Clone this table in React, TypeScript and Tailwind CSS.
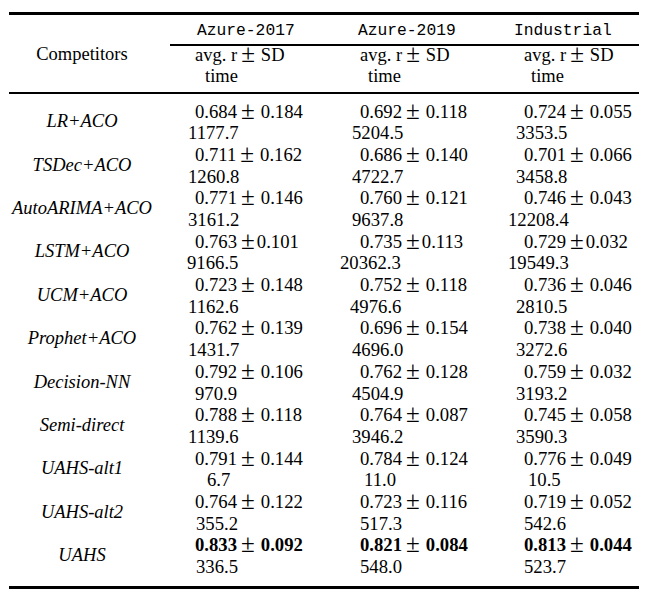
const serif = "font-['Liberation_Serif','Times_New_Roman',serif]"
const mono = "font-['Liberation_Mono','Courier_New',monospace]"

type Cell = { r: string; sd: string; time: string; pad: string }
type Row = { name: string; cells: Cell[]; tight?: boolean; bold?: boolean }

const COLS = ["w-[165px]", "w-[164px]", "w-[139px]"]

const HEADERS = [
  { title: "Azure-2017", titlePad: "pl-[27px]", timePad: "pl-[35px]" },
  { title: "Azure-2019", titlePad: "pl-[23px]", timePad: "pl-[33px]" },
  { title: "Industrial", titlePad: "pl-[15px]", timePad: "pl-[32px]" },
]

const ROWS: Row[] = [
  {
    name: "LR+ACO",
    cells: [
      { r: "0.684", sd: "0.184", time: "1177.7", pad: "pl-[18px]" },
      { r: "0.692", sd: "0.118", time: "5204.5", pad: "pl-[17px]" },
      { r: "0.724", sd: "0.055", time: "3353.5", pad: "pl-[17px]" },
    ],
  },
  {
    name: "TSDec+ACO",
    cells: [
      { r: "0.711", sd: "0.162", time: "1260.8", pad: "pl-[18px]" },
      { r: "0.686", sd: "0.140", time: "4722.7", pad: "pl-[17px]" },
      { r: "0.701", sd: "0.066", time: "3458.8", pad: "pl-[17px]" },
    ],
  },
  {
    name: "AutoARIMA+ACO",
    cells: [
      { r: "0.771", sd: "0.146", time: "3161.2", pad: "pl-[18px]" },
      { r: "0.760", sd: "0.121", time: "9637.8", pad: "pl-[17px]" },
      { r: "0.746", sd: "0.043", time: "12208.4", pad: "pl-[9px]" },
    ],
  },
  {
    name: "LSTM+ACO",
    tight: true,
    cells: [
      { r: "0.763", sd: "0.101", time: "9166.5", pad: "pl-[17px]" },
      { r: "0.735", sd: "0.113", time: "20362.3", pad: "pl-[5px]" },
      { r: "0.729", sd: "0.032", time: "19549.3", pad: "pl-[9px]" },
    ],
  },
  {
    name: "UCM+ACO",
    cells: [
      { r: "0.723", sd: "0.148", time: "1162.6", pad: "pl-[18px]" },
      { r: "0.752", sd: "0.118", time: "4976.6", pad: "pl-[15px]" },
      { r: "0.736", sd: "0.046", time: "2810.5", pad: "pl-[17px]" },
    ],
  },
  {
    name: "Prophet+ACO",
    cells: [
      { r: "0.762", sd: "0.139", time: "1431.7", pad: "pl-[18px]" },
      { r: "0.696", sd: "0.154", time: "4696.0", pad: "pl-[17px]" },
      { r: "0.738", sd: "0.040", time: "3272.6", pad: "pl-[17px]" },
    ],
  },
  {
    name: "Decision-NN",
    cells: [
      { r: "0.792", sd: "0.106", time: "970.9", pad: "pl-[25px]" },
      { r: "0.762", sd: "0.128", time: "4504.9", pad: "pl-[17px]" },
      { r: "0.759", sd: "0.032", time: "3193.2", pad: "pl-[17px]" },
    ],
  },
  {
    name: "Semi-direct",
    cells: [
      { r: "0.788", sd: "0.118", time: "1139.6", pad: "pl-[18px]" },
      { r: "0.764", sd: "0.087", time: "3946.2", pad: "pl-[17px]" },
      { r: "0.745", sd: "0.058", time: "3590.3", pad: "pl-[17px]" },
    ],
  },
  {
    name: "UAHS-alt1",
    cells: [
      { r: "0.791", sd: "0.144", time: "6.7", pad: "pl-[37px]" },
      { r: "0.784", sd: "0.124", time: "11.0", pad: "pl-[29px]" },
      { r: "0.776", sd: "0.049", time: "10.5", pad: "pl-[29px]" },
    ],
  },
  {
    name: "UAHS-alt2",
    cells: [
      { r: "0.764", sd: "0.122", time: "355.2", pad: "pl-[26px]" },
      { r: "0.723", sd: "0.116", time: "517.3", pad: "pl-[25px]" },
      { r: "0.719", sd: "0.052", time: "542.6", pad: "pl-[25px]" },
    ],
  },
  {
    name: "UAHS",
    bold: true,
    cells: [
      { r: "0.833", sd: "0.092", time: "336.5", pad: "pl-[26px]" },
      { r: "0.821", sd: "0.084", time: "548.0", pad: "pl-[25px]" },
      { r: "0.813", sd: "0.044", time: "523.7", pad: "pl-[25px]" },
    ],
  },
]

// math-style ± is wider than the text glyph
function PlusMinus({ tight }: { tight?: boolean }) {
  return (
    <span
      className={`relative top-[1px] font-normal text-[25px] leading-[0] ml-[4px] ${tight ? "mr-[2px]" : "mr-[6px]"}`}
    >
      ±
    </span>
  )
}

export default function App() {
  return (
    <div className={`w-[650px] h-[603px] bg-white text-black ${serif} pt-[12px]`}>
      <div className="ml-[9px] w-[630px]">
        <div className="h-[3px] bg-black" />

        {/* header */}
        <div className="flex">
          <div className="w-[161px] pr-[15px] pt-[3px] flex items-center justify-center text-[18.5px]">
            Competitors
          </div>
          <div className="flex-1 flex flex-col">
            <div className={`flex h-[28.5px] pt-[4px] items-center ${mono} text-[16.3px]`}>
              {HEADERS.map((h, i) => (
                <div key={h.title} className={`${COLS[i]} ${h.titlePad}`}>
                  {h.title}
                </div>
              ))}
            </div>
            <div className="h-[2px] bg-black" />
            <div className="flex pb-[5px] text-[18.5px]">
              {HEADERS.map((h, i) => (
                <div key={h.title} className={COLS[i]}>
                  <div className="h-[19px] leading-[19px] pl-[25px] whitespace-nowrap">
                    avg. r<PlusMinus />SD
                  </div>
                  <div className={`h-[22px] leading-[22px] ${h.timePad}`}>time</div>
                </div>
              ))}
            </div>
          </div>
        </div>
        <div className="h-[2px] bg-black" />

        {/* body */}
        <div className="pt-[7px] text-[18.7px]">
          {ROWS.map((row) => (
            <div key={row.name} className="flex h-[43.4px]">
              <div className="w-[161px] pr-[15px] flex items-center justify-center italic text-[18.5px]">
                {row.name}
              </div>
              {row.cells.map((c, i) => (
                <div key={i} className={`${COLS[i]} leading-[21.7px]`}>
                  <div className={`pl-[25px] whitespace-nowrap ${row.bold ? "font-bold" : ""}`}>
                    {c.r}
                    <PlusMinus tight={row.tight} />
                    {c.sd}
                  </div>
                  <div className={c.pad}>{c.time}</div>
                </div>
              ))}
            </div>
          ))}
        </div>

        <div className="mt-[8px] h-[3px] bg-black" />
      </div>
    </div>
  )
}
